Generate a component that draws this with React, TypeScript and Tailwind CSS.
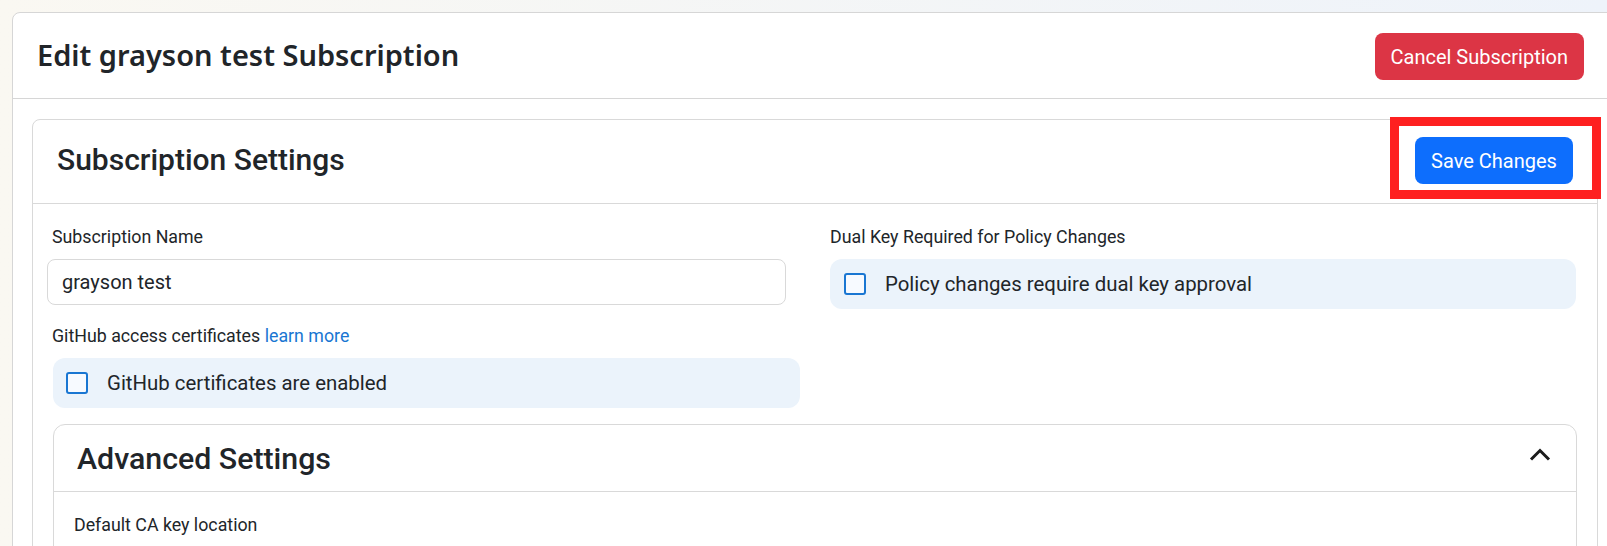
import React from 'react'

const roboto = { fontFamily: 'Roboto, "Liberation Sans", sans-serif' }

function Checkbox() {
  return <span className="block w-[22px] h-[22px] shrink-0 rounded-[3px] border-2 border-[#1976d2] bg-[#f7faff]" />
}

function CheckRow({ label, className }: { label: string; className: string }) {
  return (
    <div className={`flex items-center h-[50px] rounded-[12px] bg-[#ebf3fb] ${className}`}>
      <Checkbox />
      <span className="ml-[19px] text-[20.4px] text-[#212529]">{label}</span>
    </div>
  )
}

export default function App() {
  return (
    <div
      className="relative h-[546px] overflow-hidden bg-gradient-to-r from-[#faf8f2] to-[#eef3fa] pt-[12px] pl-[12px]"
      style={roboto}
    >
      {/* Outer card */}
      <div className="w-[1597px] rounded-tl-[8px] border border-[#d6d6d6] bg-white">
        <div className="flex items-center justify-between h-[86px] px-6 border-b border-[#d6d6d6]">
          <h1
            className="text-[29px] font-semibold text-[#212529] mt-[-2px]"
            style={{ fontFamily: '"Noto Sans", "Open Sans", sans-serif' }}
          >
            Edit grayson test Subscription
          </h1>
          <button className="h-[47px] px-4 rounded-[8px] bg-[#dc3545] text-white text-[20px] mt-[2px]">
            Cancel Subscription
          </button>
        </div>

        <div className="pl-[19px] pt-[20px]">
          {/* Subscription settings card */}
          <div className="w-[1566px] rounded-t-[8px] border border-[#d9d9d9]">
            <div className="flex items-center justify-between h-[84px] pl-[24px] pr-[24px] border-b border-[#d9d9d9]">
              <h2 className="text-[30px] font-medium text-[#212529] mt-[-4px]">Subscription Settings</h2>
              <button className="h-[47px] w-[158px] rounded-[8px] bg-[#0d6efd] text-white text-[20px] mt-[-2px]">
                Save Changes
              </button>
            </div>

            <div className="pl-[14px] pt-[21px]">
              <div className="grid grid-cols-[753px_746px] gap-x-[30px]">
                <div>
                  <div className="ml-[5px] text-[17.8px] leading-6 text-[#212529]">Subscription Name</div>
                  <div className="mt-[10px] flex items-center h-[46px] w-[739px] rounded-[8px] border border-[#d9d9d9] pl-[14px] text-[20px] text-[#212529]">
                    grayson test
                  </div>
                  <div className="mt-[19px] ml-[5px] text-[17.8px] leading-6 text-[#212529]">
                    GitHub access certificates <span className="text-[#1976d2]">learn more</span>
                  </div>
                  <CheckRow label="GitHub certificates are enabled" className="mt-[10px] ml-[6px] w-[747px] pl-[13px]" />
                </div>
                <div>
                  <div className="text-[17.8px] leading-6 text-[#212529]">Dual Key Required for Policy Changes</div>
                  <CheckRow label="Policy changes require dual key approval" className="mt-[10px] w-[746px] pl-[14px]" />
                </div>
              </div>

              {/* Advanced settings */}
              <div className="mt-[16px] ml-[6px] w-[1524px] h-[200px] rounded-t-[12px] border border-[#d9d9d9]">
                <div className="flex items-center justify-between h-[67px] pl-[23px] pr-[25px] border-b border-[#d9d9d9]">
                  <h3 className="text-[30.3px] font-medium text-[#212529] mt-[2px]">Advanced Settings</h3>
                  <svg width="22" height="13" viewBox="0 0 22 13" fill="none" className="mt-[-8px]">
                    <path d="M2 11.5 L11 2.5 L20 11.5" stroke="#1c1c1c" strokeWidth="3" />
                  </svg>
                </div>
                <div className="pl-[20px] pt-[21px] text-[17.8px] leading-6 text-[#212529]">Default CA key location</div>
              </div>
            </div>
          </div>
        </div>
      </div>

      {/* highlight annotation */}
      <div className="absolute left-[1390px] top-[117px] w-[211px] h-[82px] border-[9px] border-[#fe2020]" />
    </div>
  )
}
